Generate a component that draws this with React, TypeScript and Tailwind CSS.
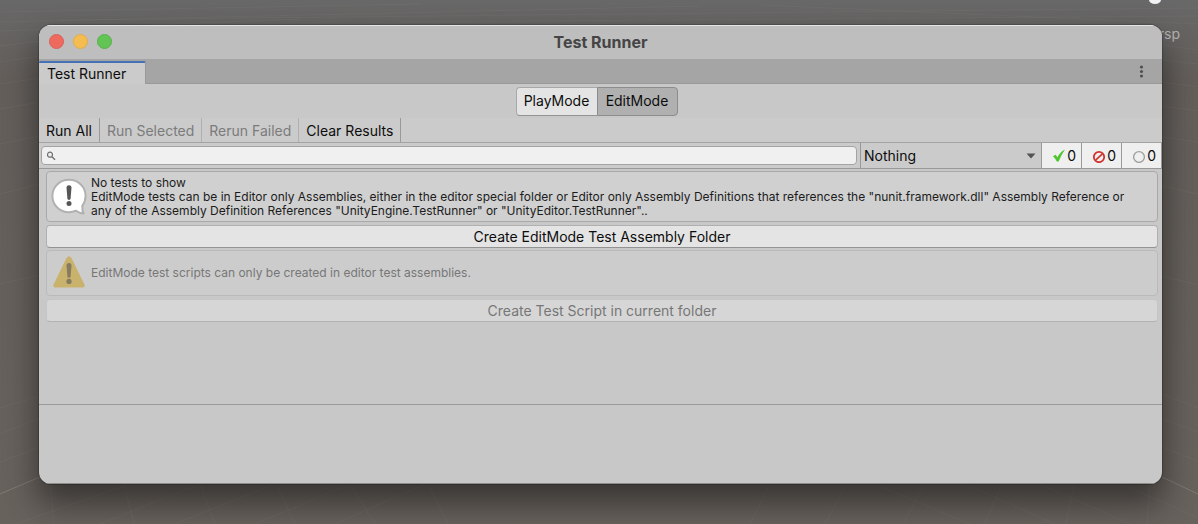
import { useState, type ReactNode } from "react";

const gridLines = [
  "M0 46 L40 41", "M0 62 L40 56", "M0 84 L40 78", "M0 109 L40 102", "M0 144 L40 136", "M0 194 L40 184", "M0 284 L40 275",
  "M0 408 L40 396", "M0 434 L40 418", "M0 462 L40 447", "M15 524 L130 484",
  "M100 524 L200 484", "M175 524 L275 484", "M255 524 L350 484", "M335 524 L425 484",
  "M50 484 L54 524", "M124 484 L134 524", "M200 484 L215 524", "M276 484 L295 524", "M350 484 L375 524", "M428 484 L448 524",
  "M770 484 L750 524", "M846 484 L825 524", "M924 484 L903 524", "M1002 484 L985 524", "M1074 484 L1066 524", "M1150 484 L1147 524",
  "M1162 45 L1198 50", "M1162 60 L1198 64", "M1162 82 L1198 87", "M1162 106 L1198 111", "M1162 137 L1198 142", "M1162 186 L1198 194",
  "M1162 276 L1198 285", "M1162 394 L1198 408", "M1162 419 L1198 432", "M1162 447 L1198 461",
  "M1122 484 L1198 518", "M1040 484 L1130 524", "M965 484 L1055 524", "M875 484 L970 524",
  "M0 12 L420 4", "M0 22 L700 6", "M60 20 L1198 8", "M400 22 L1198 16", "M0 31 L300 19", "M760 5 L1198 24",
];

function Scene() {
  return (
    <svg className="absolute inset-0 h-full w-full" viewBox="0 0 1198 524" preserveAspectRatio="none" aria-hidden="true">
      <g stroke="#9c9b95" strokeOpacity="0.1" fill="none">
        {gridLines.map((d) => (
          <path key={d} d={d} />
        ))}
      </g>
      <path d="M0 494 L40 477 M1162 477 L1198 494" stroke="#b6b2aa" strokeOpacity="0.3" />
      <ellipse cx="1155" cy="0" rx="6" ry="4" fill="#f1f1f3" />
    </svg>
  );
}

function SearchIcon() {
  return (
    <svg className="h-3 w-3 shrink-0" viewBox="0 0 12 12" fill="none" stroke="#707070" aria-hidden="true">
      <circle cx="4" cy="4.7" r="2.5" strokeWidth="1.2" />
      <path d="M6 6.7 L9 9.7" strokeWidth="1.4" />
    </svg>
  );
}

function CheckIcon() {
  return (
    <svg className="h-3.5 w-3.5" viewBox="0 0 14 14" aria-hidden="true">
      <path d="M1 7.2 L3.6 5.8 L5.5 8.2 C7 5 9.2 2.2 13 0.4 C10.6 3.8 8.6 7.6 6.6 12.6 L4.8 12.6 C3.8 10.4 2.7 8.8 1 7.2 Z" fill="#4fc62e" />
    </svg>
  );
}

function FailedIcon() {
  return (
    <svg className="h-3.5 w-3.5" viewBox="0 0 14 14" fill="none" stroke="#d1332e" aria-hidden="true">
      <circle cx="7" cy="8" r="5.2" strokeWidth="1.8" />
      <path d="M3.6 11.2 L10.4 4.8" strokeWidth="1.6" />
    </svg>
  );
}

function NotRunIcon() {
  return (
    <svg className="h-3.5 w-3.5" viewBox="0 0 14 14" fill="none" aria-hidden="true">
      <circle cx="7" cy="8" r="5.4" stroke="#a0a0a0" strokeWidth="1.4" />
    </svg>
  );
}

function InfoIcon() {
  return (
    <svg className="h-10 w-10 shrink-0" viewBox="0 0 40 40" aria-hidden="true">
      <path
        d="M20 2.8 C10.6 2.8 3.4 10 3.4 19 C3.4 28 10.6 35.2 20 35.2 C22.6 35.2 24.8 34.7 27 33.8 C29.3 35.6 31.5 36.4 34.6 36.6 C33.4 34.5 33.2 31.6 33.3 28.8 C35.4 26 36.6 22.7 36.6 19 C36.6 10 29.4 2.8 20 2.8 Z"
        fill="#fff"
        stroke="#b1b1b1"
        strokeWidth="2"
        strokeLinejoin="round"
      />
      <path d="M17.5 10.5 Q17.5 8.2 20 8.2 Q22.5 8.2 22.5 10.5 L21.6 21.6 Q21.4 23 20 23 Q18.6 23 18.4 21.6 Z" fill="#565656" />
      <circle cx="20" cy="26.4" r="2.5" fill="#565656" />
    </svg>
  );
}

function WarningIcon() {
  return (
    <svg className="h-10 w-10 shrink-0" viewBox="0 0 40 40" aria-hidden="true">
      <path d="M17.5 5 Q20 1.4 22.5 5 L35.4 31.4 Q36.3 34.4 33.6 34.4 L6.4 34.4 Q3.7 34.4 4.6 31.4 Z" fill="#c9b26c" />
      <path d="M17.5 12.6 Q17.5 10 20 10 Q22.5 10 22.5 12.6 L21.6 23.4 Q21.4 24.8 20 24.8 Q18.6 24.8 18.4 23.4 Z" fill="#857b60" />
      <circle cx="20" cy="28.4" r="2.6" fill="#857b60" />
    </svg>
  );
}

function ToolbarButton({ children, disabled }: { children: ReactNode; disabled?: boolean }) {
  return (
    <button
      type="button"
      disabled={disabled}
      className="border-r border-[#999] px-[7px] pt-px text-[#0d0d0d] disabled:border-[#b0b0b0] disabled:text-[#7b7b7b]"
    >
      {children}
    </button>
  );
}

function ResultToggle({ label, icon }: { label: string; icon: ReactNode }) {
  return (
    <button
      type="button"
      aria-label={`${label}: 0`}
      className="flex w-10 items-center justify-end gap-px border-r border-[#999] bg-[#efefef] pr-[5px]"
    >
      {icon}
      <span>0</span>
    </button>
  );
}

export default function App() {
  const [mode, setMode] = useState("EditMode");
  const [query, setQuery] = useState("");

  return (
    <div className="relative flex min-h-screen flex-col bg-linear-to-b from-[#686868] via-[#635e5a] via-15% to-[#68625d] pt-[25px] pr-9 pb-10 pl-[39px] font-['Inter',sans-serif] text-[14px] leading-5 text-[#0d0d0d]">
      <Scene />
      <span className="absolute top-6 right-[18px] text-[#b5b3b1]">Persp</span>

      <main className="relative flex flex-1 flex-col overflow-hidden rounded-xl bg-[#c8c8c8] shadow-[0_0_1px_1px_rgba(0,0,0,0.2),0_18px_32px_2px_rgba(0,0,0,0.45)]">
        <header className="grid h-[34px] grid-cols-[1fr_auto_1fr] items-center border-t border-[#e4e4e4] bg-[#bebebe] px-2.5 pb-0.5">
          <div className="flex gap-[9px]">
            <button type="button" aria-label="Close" className="h-[15px] w-[15px] rounded-full border border-[#d9605a] bg-[#ee6a5f]" />
            <button type="button" aria-label="Minimize" className="h-[15px] w-[15px] rounded-full border border-[#dfac4b] bg-[#f5bd4f]" />
            <button type="button" aria-label="Zoom" className="h-[15px] w-[15px] rounded-full border border-[#58b04c] bg-[#61c454]" />
          </div>
          <h1 className="text-[16px] font-bold text-[#454545]">Test Runner</h1>
        </header>

        <div className="flex h-[25px] justify-between bg-[#a5a5a5] pt-0.5 shadow-[inset_0_-1px_0_#999]">
          <button type="button" className="w-[107px] rounded-t-xs border-t-2 border-r border-t-[#4472b4] border-r-[#999] bg-[#cbcbcb] pl-2 text-left">
            Test Runner
          </button>
          <button type="button" aria-label="Window menu" className="mr-2 px-1">
            <svg className="h-4 w-4" viewBox="0 0 16 16" fill="#505050" aria-hidden="true">
              <circle cx="7.5" cy="2" r="1.6" />
              <circle cx="7.5" cy="6.5" r="1.6" />
              <circle cx="7.5" cy="11" r="1.6" />
            </svg>
          </button>
        </div>

        <div className="flex h-[34px] justify-center pt-[3px] pb-0.5 pr-2">
          {["PlayMode", "EditMode"].map((name) => (
            <button
              key={name}
              type="button"
              aria-pressed={mode === name}
              onClick={() => setMode(name)}
              className="w-[81px] border border-[#a8a8a8] border-b-[#939393] bg-[#e4e4e4] pb-0.5 first:rounded-l-sm first:border-r-0 last:rounded-r-sm aria-pressed:border-[#8c8c8c] aria-pressed:bg-[#b0b0b0]"
            >
              {name}
            </button>
          ))}
        </div>

        <div className="flex h-[25px] border-b border-[#a3a3a3] bg-[#cbcbcb]">
          <ToolbarButton>Run All</ToolbarButton>
          <ToolbarButton disabled>Run Selected</ToolbarButton>
          <ToolbarButton disabled>Rerun Failed</ToolbarButton>
          <ToolbarButton>Clear Results</ToolbarButton>
        </div>

        <div className="flex h-[26px] border-b border-[#999] bg-[#cbcbcb]">
          <label className="my-[3px] mr-[3px] ml-0.5 flex flex-1 items-center rounded-sm border border-[#a3a3a3] bg-[#f0f0f0] pl-1">
            <SearchIcon />
            <input
              type="text"
              aria-label="Search tests"
              value={query}
              onChange={(e) => setQuery(e.target.value)}
              className="h-4 min-w-0 flex-1 bg-transparent px-1 outline-none"
            />
          </label>
          <div className="relative flex w-[182px] border-x border-[#999]">
            <select aria-label="Category" className="w-full appearance-none bg-transparent pl-[3px] outline-none">
              <option>Nothing</option>
            </select>
            <svg className="pointer-events-none absolute top-2.5 right-[5px] h-1.5 w-2.5" viewBox="0 0 10 6" aria-hidden="true">
              <path d="M0.5 0.5 H9.5 L5 5.5 Z" fill="#545454" />
            </svg>
          </div>
          <ResultToggle label="Passed" icon={<CheckIcon />} />
          <ResultToggle label="Failed" icon={<FailedIcon />} />
          <ResultToggle label="Not run" icon={<NotRunIcon />} />
        </div>

        <section className="flex flex-1 flex-col pt-0.5 pr-1 pl-[7px]">
          <div className="flex min-h-[51px] items-center gap-0.5 rounded-sm border border-[#a9a9a9] bg-[#d0d0d0] pr-3 pl-0.5 text-[12px] leading-[14px] text-[#1c1c1c]">
            <InfoIcon />
            <p>
              No tests to show
              <br />
              EditMode tests can be in Editor only Assemblies, either in the editor special folder or Editor only Assembly Definitions that
              references the "nunit.framework.dll" Assembly Reference or any of the Assembly Definition References "UnityEngine.TestRunner"
              or "UnityEditor.TestRunner"..
            </p>
          </div>
          <button type="button" className="mt-[3px] h-[23px] rounded-sm border border-[#b0b0b0] border-b-[#939393] bg-[#e4e4e4]">
            Create EditMode Test Assembly Folder
          </button>
          <div className="mt-0.5 flex min-h-[46px] items-center gap-0.5 rounded-sm border border-[#bababa] bg-[#cccccc] pl-0.5 text-[12px] leading-[14px] text-[#777]">
            <WarningIcon />
            <p>EditMode test scripts can only be created in editor test assemblies.</p>
          </div>
          <button type="button" disabled className="mt-[3px] h-[23px] rounded-sm border border-[#c6c6c6] border-b-[#b2b2b2] bg-[#d6d6d6] text-[#777]">
            Create Test Script in current folder
          </button>
        </section>

        <section aria-label="Test output" className="h-20 border-t border-[#999] shadow-[inset_0_-1px_0_#8c8c8a]" />
      </main>
    </div>
  );
}
